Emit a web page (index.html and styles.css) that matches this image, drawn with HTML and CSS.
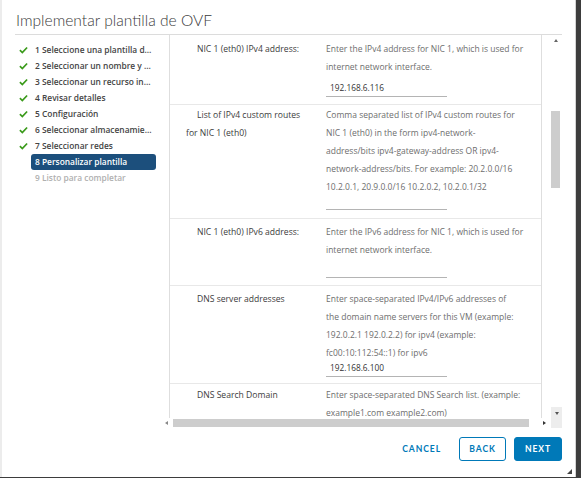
FILE: index.html
```html
<!DOCTYPE html>
<html lang="es">
<head>
<meta charset="utf-8">
<title>Implementar plantilla de OVF</title>
<link rel="stylesheet" href="styles.css">
</head>
<body>
<div class="dialog">
  <header class="title">Implementar plantilla de OVF</header>
  <div class="main">
    <nav class="steps">
      <ul>
        <li class="done"><svg class="check" viewBox="0 0 10 8"><polyline points="1,4.2 3.7,6.8 9,1.2"/></svg><span>1 Seleccione una plantilla de OVF</span></li>
        <li class="done"><svg class="check" viewBox="0 0 10 8"><polyline points="1,4.2 3.7,6.8 9,1.2"/></svg><span>2 Seleccionar un nombre y una carpeta</span></li>
        <li class="done"><svg class="check" viewBox="0 0 10 8"><polyline points="1,4.2 3.7,6.8 9,1.2"/></svg><span>3 Seleccionar un recurso informático</span></li>
        <li class="done"><svg class="check" viewBox="0 0 10 8"><polyline points="1,4.2 3.7,6.8 9,1.2"/></svg><span>4 Revisar detalles</span></li>
        <li class="done"><svg class="check" viewBox="0 0 10 8"><polyline points="1,4.2 3.7,6.8 9,1.2"/></svg><span>5 Configuración</span></li>
        <li class="done"><svg class="check" viewBox="0 0 10 8"><polyline points="1,4.2 3.7,6.8 9,1.2"/></svg><span>6 Seleccionar almacenamiento</span></li>
        <li class="done"><svg class="check" viewBox="0 0 10 8"><polyline points="1,4.2 3.7,6.8 9,1.2"/></svg><span>7 Seleccionar redes</span></li>
        <li class="active"><i class="nocheck"></i><span>8 Personalizar plantilla</span></li>
        <li class="disabled"><i class="nocheck"></i><span>9 Listo para completar</span></li>
      </ul>
    </nav>
    <section class="content">
      <div class="viewport">
        <div class="table">
          <div class="row r1">
            <div class="label">NIC 1 (eth0) IPv4 address:</div>
            <div class="field">
              <p class="desc">Enter the IPv4 address for NIC 1, which is used for<br>internet network interface.</p>
              <div class="input">192.168.6.116</div>
            </div>
          </div>
          <div class="row r2">
            <div class="label">List of IPv4 custom routes<br>for NIC 1 (eth0)</div>
            <div class="field">
              <p class="desc">Comma separated list of IPv4 custom routes for<br>NIC 1 (eth0) in the form ipv4-network-<br>address/bits ipv4-gateway-address OR ipv4-<br>network-address/bits. For example: 20.2.0.0/16<br>10.2.0.1, 20.9.0.0/16 10.2.0.2, 10.2.0.1/32</p>
              <div class="input"></div>
            </div>
          </div>
          <div class="row r3">
            <div class="label">NIC 1 (eth0) IPv6 address:</div>
            <div class="field">
              <p class="desc">Enter the IPv6 address for NIC 1, which is used for<br>internet network interface.</p>
              <div class="input"></div>
            </div>
          </div>
          <div class="row r4">
            <div class="label">DNS server addresses</div>
            <div class="field">
              <p class="desc">Enter space-separated IPv4/IPv6 addresses of<br>the domain name servers for this VM (example:<br>192.0.2.1 192.0.2.2) for ipv4 (example:<br>fc00:10:112:54::1) for ipv6</p>
              <div class="input">192.168.6.100</div>
            </div>
          </div>
          <div class="row r5">
            <div class="label">DNS Search Domain</div>
            <div class="field">
              <p class="desc">Enter space-separated DNS Search list. (example:<br>example1.com example2.com)</p>
              <div class="input"></div>
            </div>
          </div>
        </div>
      </div>
      <div class="vbar">
        <span class="arrow up"></span>
        <div class="vtrack"><div class="vthumb"></div></div>
        <div class="downbox"><span class="arrow down"></span></div>
      </div>
      <div class="hbar">
        <span class="arrow left"></span>
        <div class="htrack"><div class="hthumb"></div></div>
        <span class="arrow right"></span>
      </div>
    </section>
  </div>
  <footer class="buttons">
    <button class="btn flat">CANCEL</button>
    <button class="btn outline">BACK</button>
    <button class="btn primary">NEXT</button>
  </footer>
  <span class="resize"></span>
</div>
</body>
</html>
```

FILE: styles.css
```css
* { box-sizing: border-box; }
html, body { margin: 0; padding: 0; }
body {
  width: 581px;
  height: 478px;
  background: #3d3d3d;
  font-family: "Open Sans", "Noto Sans", sans-serif;
  overflow: hidden;
}
.dialog {
  position: relative;
  width: 576px;
  height: 477px;
  background: #fff;
  border-left: 2px solid #ececec;
  border-right: 1px solid #d4d4d4;
  display: flex;
  flex-direction: column;
}
.title {
  margin: 0 13px;
  height: 35px;
  padding: 9px 0 0 1px;
  font-family: Lato, "Open Sans", sans-serif;
  font-size: 15.6px;
  line-height: 22px;
  font-weight: 300;
  color: #3a3a3a;
  border-bottom: 1px solid #dcdcdc;
}
.main {
  margin: 0 13px;
  height: 393px;
  display: flex;
}
.steps {
  width: 148px;
  flex: none;
}
.steps ul {
  list-style: none;
  margin: 0;
  padding: 7px 0 0 4px;
}
.steps li {
  height: 16px;
  display: flex;
  align-items: center;
  font-size: 8.4px;
  font-weight: 600;
  color: #444;
}
.check {
  width: 9px;
  height: 8px;
  margin: 0 3px 0 0;
  flex: none;
}
.check polyline {
  fill: none;
  stroke: #3a9a1a;
  stroke-width: 1.9;
}
.nocheck { width: 12px; flex: none; }
.steps li span {
  display: block;
  width: 125px;
  height: 16px;
  line-height: 16px;
  padding: 0 4px;
  white-space: nowrap;
  overflow: hidden;
  text-overflow: ellipsis;
  border-radius: 3px;
}
.steps li.active span {
  background: #1c4f7c;
  color: #fff;
}
.steps li.disabled { color: #b0b0b0; }

.content {
  flex: 1;
  display: grid;
  grid-template-columns: 1fr 12px;
  grid-template-rows: 1fr 10px;
  grid-template-areas: "view vbar" "hbar vbar";
}
.viewport {
  grid-area: view;
  overflow: hidden;
}
.table {
  margin-left: 6px;
  width: 373px;
  border-left: 1px solid #dedede;
  border-right: 1px solid #dedede;
  min-height: 100%;
}
.row {
  display: flex;
  border-bottom: 1px solid #e8e8e8;
  font-size: 8.5px;
}
.label {
  width: 148px;
  flex: none;
  padding: 5px 4px 0 16px;
  text-indent: 11px;
  line-height: 18px;
  font-size: 8.6px;
  color: #3c3c3c;
  white-space: nowrap;
}
.field {
  flex: 1;
  padding: 5px 0 7px 8px;
}
.desc {
  margin: 0;
  line-height: 18px;
  color: #6e6e6e;
  white-space: nowrap;
}
.input {
  margin-top: 3px;
  width: 121px;
  height: 18px;
  line-height: 17px;
  padding-left: 4px;
  font-size: 8.3px;
  color: #333;
  border-bottom: 1px solid #b4b4b4;
}
.r2 .label, .r2 .field { padding-top: 1px; }
.r2 .field { padding-bottom: 8px; }
.r2 .input { margin-top: -4px; }
.r3 .label, .r3 .field { padding-top: 4px; }
.r3 .input { margin-top: 1px; }
.r4 .label, .r4 .field { padding-top: 4px; }
.r4 .field { padding-bottom: 6px; }
.r4 .input { margin-top: -3px; }
.r5 .label, .r5 .field { padding-top: 2px; }

.vbar {
  grid-area: vbar;
  display: flex;
  flex-direction: column;
  align-items: center;
}
.vtrack {
  flex: 1;
  width: 100%;
  padding: 69px 2px 0 1px;
}
.vthumb {
  width: 9px;
  height: 77px;
  background: #cdcdcd;
}
.downbox {
  width: 11px;
  height: 21px;
  background: #ededed;
  display: flex;
  justify-content: center;
  padding-top: 5px;
  margin-left: 1px;
}
.hbar {
  grid-area: hbar;
  display: flex;
  align-items: center;
}
.htrack {
  flex: 1;
  height: 100%;
  padding: 1px 14px 1px 5px;
}
.hthumb {
  height: 100%;
  background: #cdcdcd;
}
.arrow {
  width: 0;
  height: 0;
  border-style: solid;
  border-color: transparent;
  flex: none;
}
.arrow.up {
  margin-top: 4px;
  border-width: 0 2.5px 3px 2.5px;
  border-bottom-color: #666;
}
.arrow.down {
  border-width: 3px 2.5px 0 2.5px;
  border-top-color: #555;
}
.arrow.left {
  margin-left: 2px;
  border-width: 2.5px 3px 2.5px 0;
  border-right-color: #888;
}
.arrow.right {
  margin-right: 4px;
  border-width: 2.5px 0 2.5px 3px;
  border-left-color: #333;
}

.buttons {
  margin: 0 13px;
  padding-top: 9px;
  display: flex;
  justify-content: flex-end;
  gap: 8px;
}
.btn {
  height: 24px;
  padding: 0 10px;
  font-family: Lato, "Open Sans", sans-serif;
  font-size: 8.6px;
  font-weight: 700;
  letter-spacing: 0.9px;
  border-radius: 3px;
  border: 1px solid transparent;
  background: #fff;
  color: #0079b8;
}
.btn.flat { padding: 0 9px; }
.btn.outline { border-color: #0079b8; width: 47px; padding: 0; }
.btn.primary { background: #0079b8; border-color: #0079b8; color: #fff; width: 48px; padding: 0; }
.resize {
  position: absolute;
  right: 3px;
  bottom: 3px;
  width: 0;
  height: 0;
  border-style: solid;
  border-width: 0 0 5px 5px;
  border-color: transparent transparent #444 transparent;
}
```
